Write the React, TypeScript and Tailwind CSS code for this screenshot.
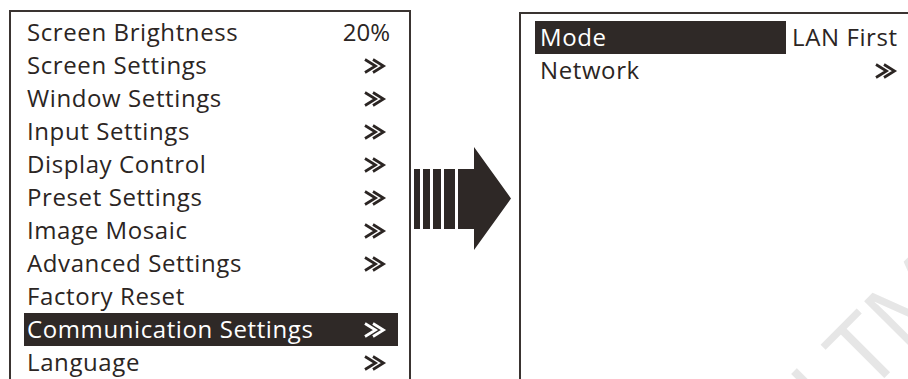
import React from "react";

const Chev = ({ light }: { light?: boolean }) => (
  <svg width="24" height="16" viewBox="0 0 24 16" className="block">
    <polyline points="2,1.5 12.5,8 2,14.5" fill="none" stroke={light ? "#ffffff" : "#2b2523"} strokeWidth="2.7" strokeLinejoin="miter" />
    <polyline points="10,1.5 20.5,8 10,14.5" fill="none" stroke={light ? "#ffffff" : "#2b2523"} strokeWidth="2.7" strokeLinejoin="miter" />
  </svg>
);

type Row = { label: string; value?: "chev" | string; active?: boolean };

const leftRows: Row[] = [
  { label: "Screen Brightness", value: "20%" },
  { label: "Screen Settings", value: "chev" },
  { label: "Window Settings", value: "chev" },
  { label: "Input Settings", value: "chev" },
  { label: "Display Control", value: "chev" },
  { label: "Preset Settings", value: "chev" },
  { label: "Image Mosaic", value: "chev" },
  { label: "Advanced Settings", value: "chev" },
  { label: "Factory Reset" },
  { label: "Communication Settings", value: "chev", active: true },
  { label: "Language", value: "chev" },
];

export default function App() {
  return (
    <div
      className="relative w-[908px] h-[379px] overflow-hidden bg-white flex items-start text-[#2b2523]"
      style={{ fontFamily: '"Open Sans", "Noto Sans", sans-serif' }}
    >
      {/* Left menu */}
      <div className="ml-[9px] mt-[10px] w-[402px] h-[420px] shrink-0 border-2 border-[#3a3431] pt-[4px] pl-[13px] pr-[11px]">
        {leftRows.map((r) => (
          <div
            key={r.label}
            className={
              "h-[33px] flex items-center justify-between pl-[3px] pr-[11px] text-[24px] tracking-[0.6px] leading-none " +
              (r.active ? "bg-[#2f2927] text-white" : "")
            }
          >
            <span className="-mt-[2px]">{r.label}</span>
            {r.value === "chev" ? (
              <Chev light={r.active} />
            ) : r.value ? (
              <span className="mr-[-3px] -mt-[2px] tracking-[0px]">{r.value}</span>
            ) : null}
          </div>
        ))}
      </div>

      {/* Arrow */}
      <svg width="108" height="260" viewBox="0 0 108 260" className="shrink-0 block">
        <g fill="#2e2826">
          <rect x="3" y="169" width="6" height="60" />
          <rect x="12" y="169" width="7" height="60" />
          <rect x="22" y="169" width="8" height="60" />
          <rect x="33" y="169" width="11" height="60" />
          <polygon points="47,169 63,169 63,147 100,198.5 63,250 63,229 47,229" />
        </g>
      </svg>

      {/* Right menu */}
      <div className="mt-[12px] w-[440px] h-[420px] shrink-0 border-2 border-[#3a3431] pt-[7px] pl-[14px]">
        <div className="flex h-[33px] items-center text-[24px] tracking-[0.6px] leading-none">
          <div className="w-[251px] h-[33px] shrink-0 flex items-center pl-[5px] bg-[#2f2927] text-white">
            <span className="-mt-[2px]">Mode</span>
          </div>
          <div className="pl-[6px] -mt-[2px] whitespace-nowrap">LAN First</div>
        </div>
        <div className="flex h-[33px] items-center text-[24px] tracking-[0.6px] leading-none">
          <div className="w-[251px] h-[33px] shrink-0 flex items-center pl-[5px]">
            <span className="-mt-[2px]">Network</span>
          </div>
          <div className="pl-[88px]">
            <Chev />
          </div>
        </div>
      </div>

      {/* Watermark */}
      <span
        className="absolute left-[773px] top-[369px] origin-top-left -rotate-45 text-[96px] leading-none text-[#e6e6e6] pointer-events-none select-none"
        style={{ fontFamily: '"Open Sans", sans-serif' }}
      >
        LTM
      </span>
    </div>
  );
}
